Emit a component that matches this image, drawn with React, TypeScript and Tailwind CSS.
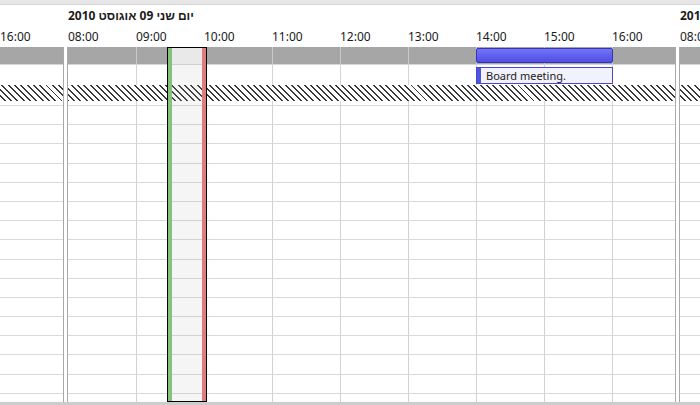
import clsx from "clsx";

const hours = ["08:00", "09:00", "10:00", "11:00", "12:00", "13:00", "14:00", "15:00", "16:00"];
const font = { fontFamily: '"Noto Sans", "Liberation Sans", "DejaVu Sans", sans-serif' };

// double line between two days
function DaySep({ className }: { className?: string }) {
  return <div className={clsx("w-[5px] shrink-0 border-x border-[#a9a9a9] bg-white", className)} />;
}

// one band across the visible days; `cell` styles every hour slot
function Band({
  height,
  cell,
  line,
  sepClass,
}: {
  height: string;
  cell: string;
  line: string;
  sepClass?: string;
}) {
  return (
    <div className={clsx("flex shrink-0", height)}>
      <div className={clsx("w-[63px] shrink-0", cell)} />
      <DaySep className={sepClass} />
      <div className="flex w-[607px] shrink-0">
        {hours.map((h, i) => (
          <div
            key={h}
            className={clsx(
              "shrink-0",
              i === 8 ? "w-[63px]" : "w-[68px]",
              i > 0 && "border-l",
              line,
              cell
            )}
          />
        ))}
      </div>
      <DaySep className={sepClass} />
      <div className={clsx("flex-1", cell)} />
    </div>
  );
}

export default function App() {
  const labels = ["16:00", ...hours, "08:00"];

  return (
    <div className="relative h-[405px] w-[700px] overflow-hidden bg-white text-[#1a1a1a]" style={font}>
      <div className="flex h-full flex-col">
        <div className="h-[5px] shrink-0 border-b border-[#d4d4d4] bg-[#e6e6e6]" />

        {/* day titles */}
        <div className="flex h-[22px] shrink-0 items-center text-[12px] font-bold">
          <div className="w-[68px] shrink-0" />
          <div className="w-[612px] shrink-0">
            <span dir="rtl">יום שני 09 אוגוסט 2010</span>
          </div>
          <div className="shrink-0 whitespace-nowrap">
            <span dir="rtl">יום שלישי 10 אוגוסט 2010</span>
          </div>
        </div>

        {/* hour labels */}
        <div className="flex h-[20px] shrink-0 items-center text-[12px]">
          {labels.map((l, i) => (
            <div key={i} className="w-[68px] shrink-0 whitespace-nowrap">
              {l}
            </div>
          ))}
        </div>

        {/* all-day strip */}
        <Band height="h-[17px]" cell="bg-[#a6a6a6]" line="border-[#c9c9c9]" />
        <Band height="h-[21px]" cell="border-t border-t-[#d6d6d6] bg-white" line="border-l-[#d4d4d4]" />

        {/* non-working block */}
        <Band
          height="h-[16px]"
          cell="bg-fixed bg-[repeating-linear-gradient(45deg,#383838_0px,#383838_1.4px,#ffffff_1.4px,#ffffff_4.45px)]"
          line="border-transparent"
        />

        {/* time slots */}
        <div className="flex-1 overflow-hidden">
          <Band height="h-[4px]" cell="bg-white" line="border-[#d4d4d4]" />
          {Array.from({ length: 16 }).map((_, r) => (
            <Band
              key={r}
              height="h-[19.2px]"
              cell="border-t border-t-[#d9d9d9]"
              line="border-l-[#d2d2d2]"
            />
          ))}
        </div>
        <div className="h-[3px] shrink-0 bg-[#cdcdcd]" />
      </div>

      {/* appointment */}
      <div className="absolute left-[476px] top-[48px] h-[15px] w-[137px] rounded-[2px] border border-[#3434b4] bg-gradient-to-b from-[#7474f4] to-[#4e4ee6]" />
      <div className="absolute left-[476px] top-[67px] flex h-[17px] w-[137px] items-center border border-[#4848c8] bg-[#f1f2fb]">
        <div className="h-full w-[4px] bg-[#5252e2]" />
        <span className="pl-[5px] text-[11px] leading-none text-[#222]">Board meeting.</span>
      </div>

      {/* selected slot */}
      <div className="absolute left-[167px] top-[47px] flex h-[355px] w-[40px] border border-black">
        <div className="w-[4px] bg-[#86c07a]" />
        <div className="flex flex-1 flex-col bg-[#9a9aaa]/10">
          <div className="h-[16px] bg-[#e9e9e9]" />
        </div>
        <div className="w-[4px] bg-[#e07c7c]" />
      </div>
    </div>
  );
}
